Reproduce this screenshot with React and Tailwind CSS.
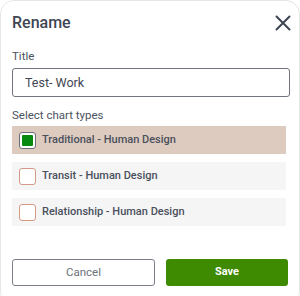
import React, { useState } from "react";

const chartTypes = [
  "Traditional - Human Design",
  "Transit - Human Design",
  "Relationship - Human Design",
];

const App = () => {
  const [title, setTitle] = useState("Test- Work");
  const [selected, setSelected] = useState([0]);

  const toggle = (i) =>
    setSelected((prev) =>
      prev.includes(i) ? prev.filter((x) => x !== i) : [...prev, i]
    );

  return (
    <div className="w-[300px] h-[296px] bg-white overflow-hidden" style={{ fontFamily: "Roboto, 'Noto Sans', sans-serif" }}>
      <div className="h-[306px] bg-white rounded-[14px] border border-[#e6e6e6] px-[11px] pt-[11px]">
        {/* Header */}
        <div className="flex items-center justify-between h-[22px]">
          <h2 className="text-[16px] font-medium text-[#3f4653] leading-none">Rename</h2>
          <svg width="16" height="16" viewBox="0 0 16 16" className="-mr-[3px]">
            <path d="M1.5 1.5 L14.5 14.5 M14.5 1.5 L1.5 14.5" stroke="#3f4653" strokeWidth="2" strokeLinecap="round" />
          </svg>
        </div>

        {/* Title */}
        <label className="block mt-[15px] text-[11.5px] text-[#4b5260] leading-[14px]">Title</label>
        <input
          value={title}
          onChange={(e) => setTitle(e.target.value)}
          className="mt-[5px] block w-[278px] h-[29px] border border-[#70757e] rounded-[3px] px-[12px] text-[12.5px] text-[#3f4653] outline-none"
        />

        {/* Chart types */}
        <label className="block mt-[11px] text-[11.5px] text-[#4b5260] leading-[14px]">Select chart types</label>
        <div className="mt-[4px] flex flex-col gap-[8px]">
          {chartTypes.map((name, i) => {
            const on = selected.includes(i);
            return (
              <div
                key={name}
                onClick={() => toggle(i)}
                className={`w-[274px] h-[28px] flex items-center pl-[7px] cursor-pointer ${
                  on ? "bg-[#ddcbbf]" : "bg-[#f5f5f5]"
                }`}
              >
                {on ? (
                  <span className="w-[17px] h-[17px] rounded-[3px] border border-[#6b6f76] bg-white flex items-center justify-center">
                    <span className="w-[11px] h-[11px] bg-[#078a10] rounded-[1px]" />
                  </span>
                ) : (
                  <span className="w-[17px] h-[17px] rounded-[3px] border border-[#d49a88] bg-white" />
                )}
                <span className="ml-[6px] text-[11px] font-medium text-[#4a505c]">{name}</span>
              </div>
            );
          })}
        </div>

        {/* Buttons */}
        <div className="mt-[33px] flex gap-[11px]">
          <button className="w-[144px] h-[27px] border border-[#7b808a] rounded-[3px] text-[11.5px] text-[#6b717c] bg-white">
            Cancel
          </button>
          <button className="w-[123px] h-[27px] rounded-[3px] text-[11px] font-bold text-white bg-[#3e8a00]">
            Save
          </button>
        </div>
      </div>
    </div>
  );
};

export default App;
